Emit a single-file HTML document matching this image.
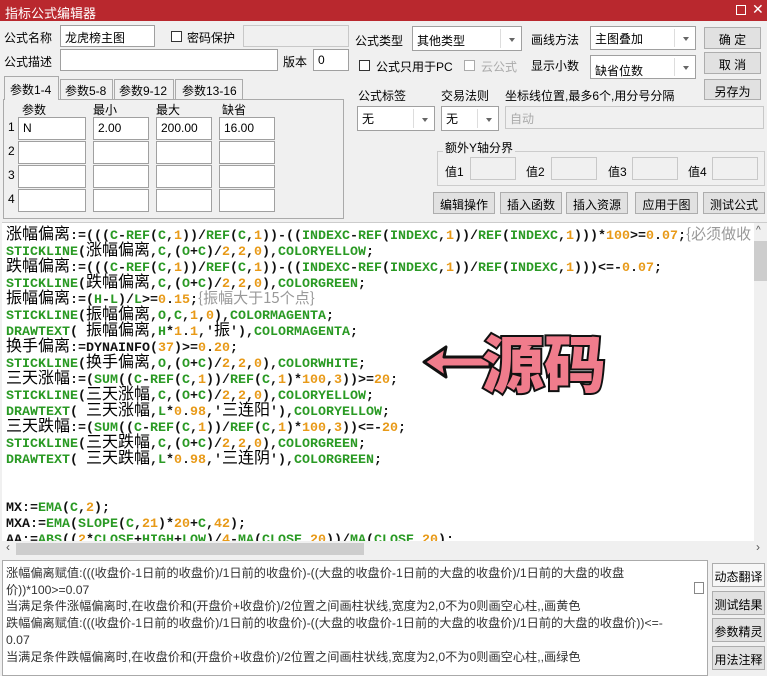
<!DOCTYPE html>
<html><head><meta charset="utf-8"><style>
*{box-sizing:border-box;margin:0;padding:0}
body{width:767px;height:676px;overflow:hidden;background:#f0f0f0;font-family:"Liberation Sans","Noto Sans CJK SC",sans-serif;font-size:12px;color:#000;position:relative}
.a{position:absolute;white-space:nowrap}
.in{position:absolute;background:#fff;border:1px solid #a0a0a0}
.dis{background:#f0f0f0;border:1px solid #c8c8c8}
.btn{position:absolute;background:#e1e1e1;border:1px solid #adadad;text-align:center;font-size:12px}
.sel{position:absolute;background:#fff;border:1px solid #a0a0a0;padding:3px 4px}
.sel:after{content:"";position:absolute;right:6px;top:50%;margin-top:-1px;border:3px solid transparent;border-top:4px solid #666}
.sel i{position:absolute;right:20px;top:2px;bottom:2px;border-left:1px solid #ddd}
.cb{position:absolute;width:11px;height:11px;border:1px solid #333;background:#fff}
.code{position:absolute;left:2px;top:222px;width:765px;height:333px;background:#fff;border-top:1px solid #ccc;overflow:hidden}
.code pre{font-family:"Liberation Mono",monospace;font-weight:bold;font-size:13.33px;line-height:16px;padding:6px 0 0 4px;color:#111}
.code pre b{font-weight:normal;font-family:"Liberation Sans","Noto Sans CJK SC",sans-serif;font-size:16px;color:#000;line-height:0}
.g{color:#2a9a24}.o{color:#e89a18}.c{color:#999;font-weight:normal;font-family:"Noto Sans CJK SC",sans-serif;font-size:15px;line-height:0}
</style></head><body>
<div class="a" style="left:0;top:0;width:767px;height:21px;background:#b9282e;color:#fff;font-size:13px;padding:3px 5px">指标公式编辑器</div>
<div class="a" style="left:736px;top:5px;width:10px;height:10px;border:1px solid #fff"></div>
<div class="a" style="left:752px;top:1px;color:#fff;font-size:14px">✕</div>

<div class="a" style="left:4px;top:29px">公式名称</div>
<div class="in" style="left:60px;top:25px;width:95px;height:22px;padding:3px 4px">龙虎榜主图</div>
<div class="cb" style="left:171px;top:31px"></div><div class="a" style="left:187px;top:29px">密码保护</div>
<div class="in dis" style="left:243px;top:25px;width:106px;height:22px"></div>
<div class="a" style="left:4px;top:53px">公式描述</div>
<div class="in" style="left:60px;top:49px;width:218px;height:22px"></div>
<div class="a" style="left:283px;top:53px">版本</div>
<div class="in" style="left:313px;top:49px;width:36px;height:22px;padding:3px 4px">0</div>

<div class="a" style="left:355px;top:32px">公式类型</div>
<div class="sel" style="left:412px;top:26px;width:110px;height:25px;padding-top:5px">其他类型<i></i></div>
<div class="a" style="left:531px;top:31px">画线方法</div>
<div class="sel" style="left:590px;top:26px;width:106px;height:24px">主图叠加<i></i></div>
<div class="btn" style="left:704px;top:27px;width:57px;height:22px;padding-top:3px">确 定</div>
<div class="cb" style="left:359px;top:60px"></div><div class="a" style="left:376px;top:58px">公式只用于PC</div>
<div class="cb" style="left:464px;top:60px;border-color:#aaa"></div><div class="a" style="left:481px;top:58px;color:#aaa">云公式</div>
<div class="a" style="left:531px;top:57px">显示小数</div>
<div class="sel" style="left:590px;top:55px;width:106px;height:24px;padding-top:6px">缺省位数<i></i></div>
<div class="btn" style="left:704px;top:52px;width:57px;height:22px;padding-top:3px">取 消</div>
<div class="btn" style="left:704px;top:79px;width:57px;height:21px;padding-top:3px">另存为</div>

<div class="a" style="left:358px;top:87px">公式标签</div>
<div class="a" style="left:441px;top:87px">交易法则</div>
<div class="a" style="left:505px;top:87px">坐标线位置,最多6个,用分号分隔</div>
<div class="sel" style="left:357px;top:106px;width:78px;height:25px">无<i></i></div>
<div class="sel" style="left:441px;top:106px;width:58px;height:25px">无<i></i></div>
<div class="in dis" style="left:505px;top:106px;width:259px;height:23px;padding:3px 4px;color:#aaa">自动</div>
<div class="a" style="left:437px;top:151px;width:328px;height:35px;border:1px solid #ccc"></div>
<div class="a" style="left:443px;top:139px;background:#f0f0f0;padding:0 2px">额外Y轴分界</div>
<div class="a" style="left:445px;top:163px">值1</div><div class="in dis" style="left:470px;top:157px;width:46px;height:23px"></div>
<div class="a" style="left:526px;top:163px">值2</div><div class="in dis" style="left:551px;top:157px;width:46px;height:23px"></div>
<div class="a" style="left:608px;top:163px">值3</div><div class="in dis" style="left:632px;top:157px;width:46px;height:23px"></div>
<div class="a" style="left:688px;top:163px">值4</div><div class="in dis" style="left:712px;top:157px;width:46px;height:23px"></div>
<div class="btn" style="left:433px;top:192px;width:62px;height:22px;padding-top:3px">编辑操作</div>
<div class="btn" style="left:500px;top:192px;width:62px;height:22px;padding-top:3px">插入函数</div>
<div class="btn" style="left:566px;top:192px;width:62px;height:22px;padding-top:3px">插入资源</div>
<div class="btn" style="left:635px;top:192px;width:63px;height:22px;padding-top:3px">应用于图</div>
<div class="btn" style="left:703px;top:192px;width:62px;height:22px;padding-top:3px">测试公式</div>

<div class="a" style="left:3px;top:99px;width:341px;height:120px;border:1px solid #aaa;background:#f0f0f0"></div>
<div class="a" style="left:4px;top:76px;width:55px;height:24px;background:#f0f0f0;border:1px solid #aaa;border-bottom:none;padding:4px 5px">参数1-4</div>
<div class="a" style="left:60px;top:79px;width:53px;height:20px;border:1px solid #aaa;border-bottom:none;padding:2px 4px">参数5-8</div>
<div class="a" style="left:114px;top:79px;width:60px;height:20px;border:1px solid #aaa;border-bottom:none;padding:2px 4px">参数9-12</div>
<div class="a" style="left:175px;top:79px;width:68px;height:20px;border:1px solid #aaa;border-bottom:none;padding:2px 6px">参数13-16</div>
<div class="a" style="left:22px;top:101px">参数</div><div class="a" style="left:93px;top:101px">最小</div><div class="a" style="left:156px;top:101px">最大</div><div class="a" style="left:222px;top:101px">缺省</div>
<div class="a" style="left:8px;top:120px">1</div><div class="a" style="left:8px;top:144px">2</div><div class="a" style="left:8px;top:168px">3</div><div class="a" style="left:8px;top:192px">4</div>
<div class="in" style="left:18px;top:117px;width:68px;height:23px;padding:3px 4px">N</div>
<div class="in" style="left:93px;top:117px;width:56px;height:23px;padding:3px 4px">2.00</div>
<div class="in" style="left:156px;top:117px;width:56px;height:23px;padding:3px 4px">200.00</div>
<div class="in" style="left:219px;top:117px;width:56px;height:23px;padding:3px 4px">16.00</div>
<div class="in" style="left:18px;top:141px;width:68px;height:23px"></div><div class="in" style="left:93px;top:141px;width:56px;height:23px"></div><div class="in" style="left:156px;top:141px;width:56px;height:23px"></div><div class="in" style="left:219px;top:141px;width:56px;height:23px"></div>
<div class="in" style="left:18px;top:165px;width:68px;height:23px"></div><div class="in" style="left:93px;top:165px;width:56px;height:23px"></div><div class="in" style="left:156px;top:165px;width:56px;height:23px"></div><div class="in" style="left:219px;top:165px;width:56px;height:23px"></div>
<div class="in" style="left:18px;top:189px;width:68px;height:23px"></div><div class="in" style="left:93px;top:189px;width:56px;height:23px"></div><div class="in" style="left:156px;top:189px;width:56px;height:23px"></div><div class="in" style="left:219px;top:189px;width:56px;height:23px"></div>

<div class="code"><pre><b>涨幅偏离</b>:=(((<span class="g">C</span>-<span class="g">REF</span>(<span class="g">C</span>,<span class="o">1</span>))/<span class="g">REF</span>(<span class="g">C</span>,<span class="o">1</span>))-((<span class="g">INDEXC</span>-<span class="g">REF</span>(<span class="g">INDEXC</span>,<span class="o">1</span>))/<span class="g">REF</span>(<span class="g">INDEXC</span>,<span class="o">1</span>)))*<span class="o">100</span>&gt;=<span class="o">0</span>.<span class="o">07</span>;<span class="c">{必须做收</span>
<span class="g">STICKLINE</span>(<b>涨幅偏离</b>,<span class="g">C</span>,(<span class="g">O</span>+<span class="g">C</span>)/<span class="o">2</span>,<span class="o">2</span>,<span class="o">0</span>),<span class="g">COLORYELLOW</span>;
<b>跌幅偏离</b>:=(((<span class="g">C</span>-<span class="g">REF</span>(<span class="g">C</span>,<span class="o">1</span>))/<span class="g">REF</span>(<span class="g">C</span>,<span class="o">1</span>))-((<span class="g">INDEXC</span>-<span class="g">REF</span>(<span class="g">INDEXC</span>,<span class="o">1</span>))/<span class="g">REF</span>(<span class="g">INDEXC</span>,<span class="o">1</span>)))&lt;=-<span class="o">0</span>.<span class="o">07</span>;
<span class="g">STICKLINE</span>(<b>跌幅偏离</b>,<span class="g">C</span>,(<span class="g">O</span>+<span class="g">C</span>)/<span class="o">2</span>,<span class="o">2</span>,<span class="o">0</span>),<span class="g">COLORGREEN</span>;
<b>振幅偏离</b>:=(<span class="g">H</span>-<span class="g">L</span>)/<span class="g">L</span>&gt;=<span class="o">0</span>.<span class="o">15</span>;<span class="c">{振幅大于15个点}</span>
<span class="g">STICKLINE</span>(<b>振幅偏离</b>,<span class="g">O</span>,<span class="g">C</span>,<span class="o">1</span>,<span class="o">0</span>),<span class="g">COLORMAGENTA</span>;
<span class="g">DRAWTEXT</span>( <b>振幅偏离</b>,<span class="g">H</span>*<span class="o">1</span>.<span class="o">1</span>,'<b>振</b>'),<span class="g">COLORMAGENTA</span>;
<b>换手偏离</b>:=DYNAINFO(<span class="o">37</span>)&gt;=<span class="o">0</span>.<span class="o">20</span>;
<span class="g">STICKLINE</span>(<b>换手偏离</b>,<span class="g">O</span>,(<span class="g">O</span>+<span class="g">C</span>)/<span class="o">2</span>,<span class="o">2</span>,<span class="o">0</span>),<span class="g">COLORWHITE</span>;
<b>三天涨幅</b>:=(<span class="g">SUM</span>((<span class="g">C</span>-<span class="g">REF</span>(<span class="g">C</span>,<span class="o">1</span>))/<span class="g">REF</span>(<span class="g">C</span>,<span class="o">1</span>)*<span class="o">100</span>,<span class="o">3</span>))&gt;=<span class="o">20</span>;
<span class="g">STICKLINE</span>(<b>三天涨幅</b>,<span class="g">C</span>,(<span class="g">O</span>+<span class="g">C</span>)/<span class="o">2</span>,<span class="o">2</span>,<span class="o">0</span>),<span class="g">COLORYELLOW</span>;
<span class="g">DRAWTEXT</span>( <b>三天涨幅</b>,<span class="g">L</span>*<span class="o">0</span>.<span class="o">98</span>,'<b>三连阳</b>'),<span class="g">COLORYELLOW</span>;
<b>三天跌幅</b>:=(<span class="g">SUM</span>((<span class="g">C</span>-<span class="g">REF</span>(<span class="g">C</span>,<span class="o">1</span>))/<span class="g">REF</span>(<span class="g">C</span>,<span class="o">1</span>)*<span class="o">100</span>,<span class="o">3</span>))&lt;=-<span class="o">20</span>;
<span class="g">STICKLINE</span>(<b>三天跌幅</b>,<span class="g">C</span>,(<span class="g">O</span>+<span class="g">C</span>)/<span class="o">2</span>,<span class="o">2</span>,<span class="o">0</span>),<span class="g">COLORGREEN</span>;
<span class="g">DRAWTEXT</span>( <b>三天跌幅</b>,<span class="g">L</span>*<span class="o">0</span>.<span class="o">98</span>,'<b>三连阴</b>'),<span class="g">COLORGREEN</span>;


MX:=<span class="g">EMA</span>(<span class="g">C</span>,<span class="o">2</span>);
MXA:=<span class="g">EMA</span>(<span class="g">SLOPE</span>(<span class="g">C</span>,<span class="o">21</span>)*<span class="o">20</span>+<span class="g">C</span>,<span class="o">42</span>);
AA:=<span class="g">ABS</span>((<span class="o">2</span>*<span class="g">CLOSE</span>+<span class="g">HIGH</span>+<span class="g">LOW</span>)/<span class="o">4</span>-<span class="g">MA</span>(<span class="g">CLOSE</span>,<span class="o">20</span>))/<span class="g">MA</span>(<span class="g">CLOSE</span>,<span class="o">20</span>);</pre>
<div class="a" style="left:752px;top:0;width:13px;height:318px;background:#f0f0f0"></div>
<div class="a" style="left:752px;top:18px;width:13px;height:40px;background:#cdcdcd"></div>
<div class="a" style="left:754px;top:2px;font-size:10px;color:#555">^</div>
<div class="a" style="left:0;top:318px;width:765px;height:15px;background:#f0f0f0"></div>
<div class="a" style="left:14px;top:320px;width:348px;height:12px;background:#cdcdcd"></div>
<div class="a" style="left:4px;top:317px;font-size:12px;color:#555">‹</div>
<div class="a" style="left:754px;top:317px;font-size:12px;color:#555">›</div>
</div>

<svg class="a" style="left:418px;top:325px" width="200" height="75" viewBox="0 0 200 75">
<path d="M6 37 L28 22 L26 32 L72 32 L72 42 L26 42 L28 52 Z" fill="#f07c8c" stroke="#111" stroke-width="3" stroke-linejoin="round"/>
<text x="64" y="62" font-family="Noto Sans CJK SC,sans-serif" font-weight="900" font-size="62" fill="#f07c8c" stroke="#111" stroke-width="4" paint-order="stroke">源码</text>
</svg>

<div class="a" style="left:2px;top:560px;width:706px;height:116px;background:#fff;border:1px solid #aaa"></div>
<div class="a" style="left:694px;top:582px;width:10px;height:12px;border:1px solid #888"></div>
<div class="a" style="left:6px;top:565px;font-size:12.2px;line-height:16.7px;color:#333;white-space:pre">涨幅偏离赋值:(((收盘价-1日前的收盘价)/1日前的收盘价)-((大盘的收盘价-1日前的大盘的收盘价)/1日前的大盘的收盘
价))*100&gt;=0.07
当满足条件涨幅偏离时,在收盘价和(开盘价+收盘价)/2位置之间画柱状线,宽度为2,0不为0则画空心柱,,画黄色
跌幅偏离赋值:(((收盘价-1日前的收盘价)/1日前的收盘价)-((大盘的收盘价-1日前的大盘的收盘价)/1日前的大盘的收盘价))&lt;=-
0.07
当满足条件跌幅偏离时,在收盘价和(开盘价+收盘价)/2位置之间画柱状线,宽度为2,0不为0则画空心柱,,画绿色</div>
<div class="btn" style="left:712px;top:563px;width:53px;height:24px;padding-top:4px;background:#f7f7f7">动态翻译</div>
<div class="btn" style="left:712px;top:591px;width:53px;height:24px;padding-top:4px">测试结果</div>
<div class="btn" style="left:712px;top:618px;width:53px;height:24px;padding-top:4px">参数精灵</div>
<div class="btn" style="left:712px;top:646px;width:53px;height:24px;padding-top:4px">用法注释</div>
</body></html>
